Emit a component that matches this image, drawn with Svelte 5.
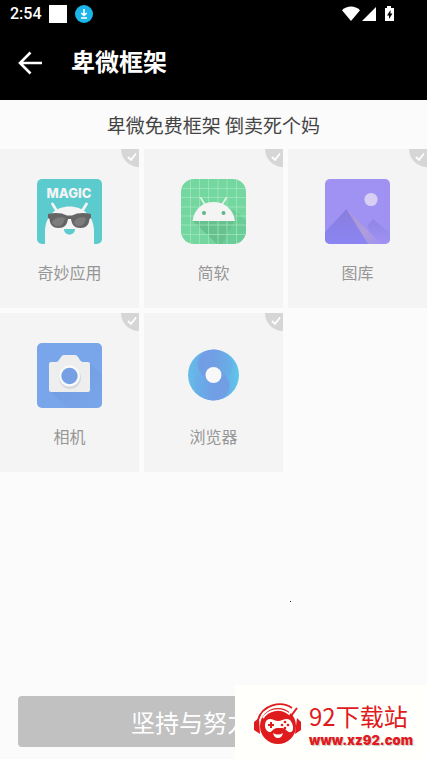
<script lang="ts">
  type App = { id: string; name: string };

  const apps: App[] = [
    { id: 'magic', name: '奇妙应用' },
    { id: 'soft', name: '简软' },
    { id: 'gallery', name: '图库' },
    { id: 'camera', name: '相机' },
    { id: 'browser', name: '浏览器' }
  ];
</script>

<div class="screen">
  <header>
    <div class="status-bar">
      <span class="time">2:54</span>
      <span class="square"></span>
      <svg class="download" width="18" height="18" viewBox="0 0 18 18" fill="none">
        <circle cx="9" cy="9" r="9" fill="#1CB5EA"/>
        <path d="M9 4v6M6.3 8L9 10.5 11.7 8M6 13h6" stroke="#fff" stroke-width="1.6"/>
      </svg>
      <svg class="signals" width="54" height="18" viewBox="0 0 54 18" fill="#fff">
        <path d="M0 5.2C5 .2 13 .2 18 5.2L9 16z"/>
        <path d="M34 2v14H20z"/>
        <path fill-rule="evenodd" d="M45 1h4v2h3v13h-9V3h2zM48.5 5l-3.500 5.500h2V14l3.500-5.500h-2z"/>
      </svg>
    </div>
    <div class="app-bar">
      <button class="back" aria-label="返回">
        <svg width="24" height="24" viewBox="0 0 24 24" fill="none">
          <path d="M12.500 1.500L2 12l10.500 10.500M2 12h22" stroke="#fff" stroke-width="2.600"/>
        </svg>
      </button>
      <h1>卑微框架</h1>
    </div>
  </header>

  <main>
    <p class="notice">卑微免费框架 倒卖死个妈</p>

    <div class="grid">
      {#each apps as app (app.id)}
        <button class="tile">
          <svg class="tick" width="18" height="18" viewBox="0 0 18 18" fill="none">
            <path d="M0 0h18v18C8 18 0 10 0 0z" fill="#D6D6D6"/>
            <path d="M7 8l3 3 5-6.500" stroke="#fff" stroke-width="1.800"/>
          </svg>
          <svg class="icon" width="65" height="65" viewBox="0 0 65 65" fill="none">
            {#if app.id === 'magic'}
              <rect width="65" height="65" rx="5" fill="#5CCBCD"/>
              <text class="magic" x="32" y="19" text-anchor="middle">MAGIC</text>
              <path d="M15.500 25l5 8M49.500 25l-5 8" stroke="#F4F4F4" stroke-width="2.800" stroke-linecap="round"/>
              <path d="M8 65V51C9 36 19 27.500 32.500 27.500S56 36 57 51v14z" fill="#F4F4F4"/>
              <path d="M11 35q11-2.500 19 1.500h5q8-4 19-1.500v4l-1.500 1c-.5 6-3.500 9-9 9-6 0-8.500-3-9.500-9h-3c-1 6-3.500 9-9.500 9-5.500 0-8.500-3-9-9l-1.500-1z" fill="#656565"/>
              <path d="M15 43c2-4 8-6 13-4-1 5-3 8-7 8-3.500 0-5-1-6-4zM37 43c2-4 8-6 12-4-1 5-3 8-7 8-3 0-4-1-5-4z" fill="#7C7C7C"/>
              <path d="M27 50h11c0 3-2 5.500-5.500 5.500S27 53 27 50z" fill="#5CCBCD"/>
            {:else if app.id === 'soft'}
              <clipPath id="soft-shape"><rect width="65" height="65" rx="13"/></clipPath>
              <g clip-path="url(#soft-shape)">
                <rect width="65" height="65" fill="#74D7A0"/>
                <path d="M12 42l24 23h29V42L53 31z" fill="#5FC18C" opacity=".5"/>
                <path d="M12 42h41L41 65h-5z" fill="#65B98A" opacity=".6"/>
                <path d="M9.500 0v65M18.500 0v65M27.500 0v65M37 0v65M46 0v65M55.500 0v65M0 9.500h65M0 18.500h65M0 28h65M0 37h65M0 46h65M0 55.500h65" stroke="#A6E8C2" stroke-width=".7"/>
              </g>
              <path d="M19.500 18.500l5 8M45.500 18.500l-5 8" stroke="#E2F5EA" stroke-width="1.600"/>
              <path d="M11.500 42C13 30 22 23 32.500 23S52.500 30 54 42z" fill="#F4F4F4"/>
              <circle cx="23" cy="34" r="2" fill="#60B58A"/>
              <circle cx="42.500" cy="34" r="2" fill="#60B58A"/>
            {:else if app.id === 'gallery'}
              <linearGradient id="peak" x1="0" y1="0" x2="0" y2="1">
                <stop offset="0" stop-color="#877EDD"/>
                <stop offset="1" stop-color="#8B85F3"/>
              </linearGradient>
              <linearGradient id="slope" x1="0" y1="0" x2="1" y2="1">
                <stop offset="0" stop-color="#AC97D3"/>
                <stop offset=".6" stop-color="#AE9CDC"/>
                <stop offset="1" stop-color="#A092F3"/>
              </linearGradient>
              <linearGradient id="far-peak" x1="0" y1="0" x2="0" y2="1">
                <stop offset="0" stop-color="#8F85E6"/>
                <stop offset="1" stop-color="#A092F3"/>
              </linearGradient>
              <clipPath id="gallery-shape"><rect width="65" height="65" rx="5"/></clipPath>
              <g clip-path="url(#gallery-shape)">
                <rect width="65" height="65" fill="#A092F3"/>
                <path d="M42 47l6-7 17 14v11H50z" fill="url(#far-peak)"/>
                <path d="M21.500 30L56 65H38z" fill="url(#slope)"/>
                <path d="M0 53l21.500-23L43 65H0z" fill="url(#peak)"/>
                <circle cx="46" cy="20.500" r="6.600" fill="#D9CFF5"/>
              </g>
            {:else if app.id === 'camera'}
              <linearGradient id="camera-shade" x1="0" y1="0" x2="1" y2="1">
                <stop offset=".3" stop-color="#6C94D8"/>
                <stop offset="1" stop-color="#79A5EA"/>
              </linearGradient>
              <rect width="65" height="65" rx="5" fill="#79A5EA"/>
              <path d="M13 48l17 17h30q5 0 5-5V32L53 20z" fill="url(#camera-shade)" opacity=".4"/>
              <path d="M14 19h5q2 0 3-2l2-3q1-2 3-2h11q2 0 3 2l2 3q1 2 3 2h5q2 0 2 2v26q0 2-2 2H14q-2 0-2-2V21q0-2 2-2z" fill="#EEEEEE"/>
              <circle cx="33" cy="35" r="11" fill="#D5D9DE"/>
              <circle cx="32.500" cy="33" r="10.500" fill="#FAFAFA"/>
              <circle cx="32.500" cy="33" r="8.200" fill="#76A0E3"/>
            {:else}
              <linearGradient id="ring" x1="0" y1="0" x2="1" y2="0">
                <stop offset="0" stop-color="#66BBE9"/>
                <stop offset=".25" stop-color="#68AEE7"/>
                <stop offset=".5" stop-color="#7299E6"/>
                <stop offset=".75" stop-color="#68AEE7"/>
                <stop offset="1" stop-color="#5CC8EA"/>
              </linearGradient>
              <linearGradient id="swirl" x1="0" y1="0" x2="1" y2="0">
                <stop offset="0" stop-color="#7796E3"/>
                <stop offset="1" stop-color="#68AEE7"/>
              </linearGradient>
              <linearGradient id="swirl-back" x1="1" y1="0" x2="0" y2="0">
                <stop offset="0" stop-color="#7796E3"/>
                <stop offset="1" stop-color="#68AEE7"/>
              </linearGradient>
              <circle cx="32.500" cy="32" r="25.500" fill="url(#ring)"/>
              <path d="M32.500 6.500C22 8 15 14 17 24c2 8 9 14 15.500 14V24c7 0 11 3 15.500 9C58 22 46 7 32.500 6.500z" fill="url(#swirl)" opacity=".75"/>
              <path d="M32.500 57.500C43 56 50 50 48 40c-2-8-9-14-15.500-14v14c-7 0-11-3-15.500-9C7 42 19 57 32.500 57.500z" fill="url(#swirl-back)" opacity=".75"/>
              <circle cx="32.500" cy="32" r="8" fill="#F8F8F8"/>
            {/if}
          </svg>
          <span class="label">{app.name}</span>
        </button>
      {/each}
    </div>
  </main>

  <button class="submit">坚持与努力</button>

  <span class="speck"></span>

  <a class="site" href="http://www.xz92.com">
    <svg width="48" height="42" viewBox="0 0 48 42" fill="none">
      <path d="M4 17C8 2 27-3 38 5" stroke="#DF1B1D" stroke-width="1.800"/>
      <path d="M5 15L0 19v8l6 4zM43 15l4 4v8l-6 4z" fill="#DF1B1D"/>
      <circle cx="24" cy="23" r="18" fill="#DF1B1D"/>
      <path d="M9 15C14 7 26 4 35 11l6-8" stroke="#FFFFFC" stroke-width="1.600"/>
      <path d="M43 5l-6 8" stroke="#DF1B1D" stroke-width="2"/>
      <path d="M13 17c4-3 7 1 11 1s8-4 12-1c4 5 4 11 1 12-4 1-5-4-9-4h-5c-4 0-5 5-8 4-5-2-5-9-2-12z" fill="#FFFFFC"/>
      <path d="M14 22h6M17 19v6" stroke="#DF1B1D" stroke-width="2"/>
      <circle cx="31" cy="19" r="1.300" fill="#DF1B1D"/>
      <circle cx="34" cy="22" r="1.300" fill="#DF1B1D"/>
      <circle cx="28" cy="22" r="1.300" fill="#DF1B1D"/>
      <circle cx="31" cy="25" r="1.300" fill="#DF1B1D"/>
      <path d="M19 30q5 3 10 0-1 5-5 5t-5-5z" fill="#FFFFFC"/>
    </svg>
    <span class="site-text">
      <span class="site-name">92下载站</span>
      <span class="site-url">www.xz92.com</span>
    </span>
  </a>
</div>

<style>
  :global(body) {
    background: #FBFBFB;
    font-family: Roboto, "Noto Sans CJK SC", sans-serif;
  }

  button {
    padding: 0;
    border: none;
    background: none;
    font-family: inherit;
  }

  .screen {
    position: relative;
    display: flex;
    flex-direction: column;
    min-height: 100vh;
  }

  header {
    padding-bottom: 2px;
    background: #000;
    color: #fff;
  }

  .status-bar {
    display: flex;
    align-items: center;
    height: 28px;
    padding: 0 31px 0 10px;
  }

  .time {
    font-size: 16px;
    line-height: 28px;
    font-weight: 500;
  }

  .square {
    width: 18px;
    height: 18px;
    margin-left: 7px;
    background: #fff;
  }

  .download {
    margin-left: 8px;
  }

  .signals {
    margin-left: auto;
  }

  .app-bar {
    display: flex;
    align-items: center;
    gap: 29px;
    height: 70px;
    padding: 0 18px;
  }

  .back {
    display: flex;
  }

  h1 {
    margin: 0;
    font-size: 24px;
    line-height: 32px;
    font-weight: 700;
  }

  main {
    flex: 1;
  }

  .notice {
    margin: 0;
    color: #444;
    font-family: "Noto Sans CJK SC", sans-serif;
    font-size: 19px;
    line-height: 49px;
    text-align: center;
  }

  .grid {
    display: grid;
    grid-template-columns: repeat(3, 1fr);
    gap: 5px;
  }

  .tile {
    position: relative;
    display: flex;
    flex-direction: column;
    align-items: center;
    gap: 17px;
    padding: 30px 0 21px;
    background: #F4F4F4;
  }

  .tick {
    position: absolute;
    top: 0;
    right: 0;
  }

  .magic {
    fill: #F4F4F4;
    font-family: Inter, sans-serif;
    font-size: 13px;
    font-weight: 800;
  }

  .label {
    color: #969696;
    font-size: 16px;
    line-height: 26px;
  }

  .submit {
    height: 51px;
    margin: 24px 18px 12px;
    padding-left: 113px;
    border-radius: 4px;
    background: #C1C1C1;
    color: #fff;
    font-size: 24px;
    text-align: left;
  }

  .speck {
    position: absolute;
    right: 136px;
    bottom: 157px;
    width: 1px;
    height: 1px;
    background: #222;
  }

  .site {
    position: absolute;
    right: 0;
    bottom: 0;
    display: flex;
    align-items: center;
    gap: 7px;
    box-sizing: border-box;
    width: 192px;
    height: 74px;
    padding: 4px 0 0 19px;
    background: #FFFFFC;
    color: #DF1B1D;
    text-decoration: none;
  }

  .site-text {
    display: flex;
    flex-direction: column;
  }

  .site-name {
    font-family: "Noto Sans CJK SC", sans-serif;
    font-size: 24px;
    line-height: 32px;
  }

  .site-url {
    font-family: Inter, sans-serif;
    font-size: 13px;
    line-height: 16px;
    font-weight: 900;
    text-shadow: 1px 1px 1px #C9C9C9;
  }
</style>
